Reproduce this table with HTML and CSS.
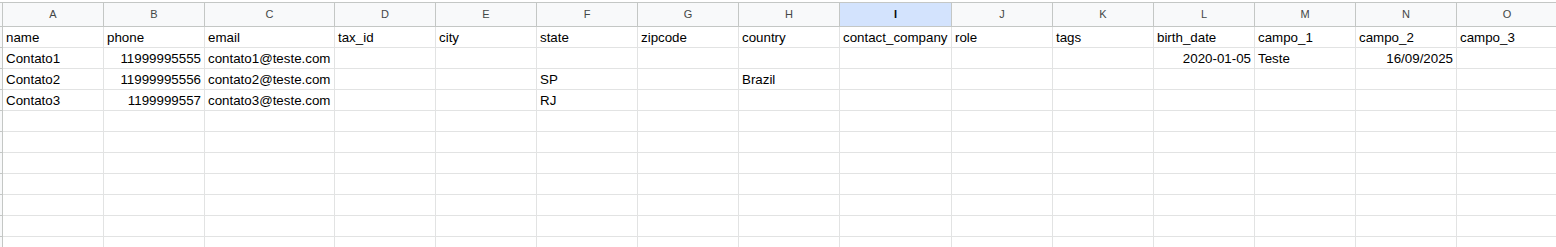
FILE: index.html
```html
<!DOCTYPE html>
<html lang="pt-BR">

<head>
    <meta charset="UTF-8">
    <meta name="viewport" content="width=device-width, initial-scale=1.0">
    <title>contatos</title>
    <link rel="stylesheet" href="styles.css">
</head>

<body>
    <div class="sheet">
        <!-- column letters -->
        <div class="row head-row">
            <div class="gutter"></div>
            <div class="col-head">A</div>
            <div class="col-head">B</div>
            <div class="col-head">C</div>
            <div class="col-head">D</div>
            <div class="col-head">E</div>
            <div class="col-head">F</div>
            <div class="col-head">G</div>
            <div class="col-head">H</div>
            <div class="col-head selected">I</div>
            <div class="col-head">J</div>
            <div class="col-head">K</div>
            <div class="col-head">L</div>
            <div class="col-head">M</div>
            <div class="col-head">N</div>
            <div class="col-head">O</div>
        </div>

        <div class="row">
            <div class="gutter"></div>
            <div class="cell">name</div>
            <div class="cell">phone</div>
            <div class="cell">email</div>
            <div class="cell">tax_id</div>
            <div class="cell">city</div>
            <div class="cell">state</div>
            <div class="cell">zipcode</div>
            <div class="cell">country</div>
            <div class="cell">contact_company</div>
            <div class="cell">role</div>
            <div class="cell">tags</div>
            <div class="cell">birth_date</div>
            <div class="cell">campo_1</div>
            <div class="cell">campo_2</div>
            <div class="cell">campo_3</div>
        </div>

        <div class="row">
            <div class="gutter"></div>
            <div class="cell">Contato1</div>
            <div class="cell num">11999995555</div>
            <div class="cell">contato1@teste.com</div>
            <div class="cell"></div>
            <div class="cell"></div>
            <div class="cell"></div>
            <div class="cell"></div>
            <div class="cell"></div>
            <div class="cell"></div>
            <div class="cell"></div>
            <div class="cell"></div>
            <div class="cell num">2020-01-05</div>
            <div class="cell">Teste</div>
            <div class="cell num">16/09/2025</div>
            <div class="cell"></div>
        </div>

        <div class="row">
            <div class="gutter"></div>
            <div class="cell">Contato2</div>
            <div class="cell num">11999995556</div>
            <div class="cell">contato2@teste.com</div>
            <div class="cell"></div>
            <div class="cell"></div>
            <div class="cell">SP</div>
            <div class="cell"></div>
            <div class="cell">Brazil</div>
            <div class="cell"></div>
            <div class="cell"></div>
            <div class="cell"></div>
            <div class="cell"></div>
            <div class="cell"></div>
            <div class="cell"></div>
            <div class="cell"></div>
        </div>

        <div class="row">
            <div class="gutter"></div>
            <div class="cell">Contato3</div>
            <div class="cell num">1199999557</div>
            <div class="cell">contato3@teste.com</div>
            <div class="cell"></div>
            <div class="cell"></div>
            <div class="cell">RJ</div>
            <div class="cell"></div>
            <div class="cell"></div>
            <div class="cell"></div>
            <div class="cell"></div>
            <div class="cell"></div>
            <div class="cell"></div>
            <div class="cell"></div>
            <div class="cell"></div>
            <div class="cell"></div>
        </div>
    </div>

    <script>
        // pad the sheet with empty rows
        const sheet = document.querySelector('.sheet')
        for (let r = 0; r < 7; r++) {
            const row = document.createElement('div')
            row.className = 'row'
            row.innerHTML = '<div class="gutter"></div>' + '<div class="cell"></div>'.repeat(15)
            sheet.appendChild(row)
        }
    </script>
</body>

</html>
```

FILE: styles.css
```css
* {
    box-sizing: border-box;
}

html,
body {
    margin: 0;
    height: 100%;
    overflow: hidden;
    background-color: #fff;
}

body {
    font-family: 'Liberation Sans', Arial, sans-serif;
    font-size: 10pt;
    color: #000;
}

.sheet {
    --cols: 3px 101px 101px 130px 101px 101px 101px 101px 101px 112px 101px 101px 101px 101px 101px 101px;
    padding-top: 2px;
}

.row {
    display: grid;
    grid-template-columns: var(--cols);
    height: 21px;
}

.row > div {
    border-right: 1px solid #e2e3e3;
    border-bottom: 1px solid #e2e3e3;
    white-space: nowrap;
    overflow: hidden;
}

.row > .gutter {
    background-color: #f8f9fa;
    border-right-color: #c4c7c5;
    border-bottom-color: #c4c7c5;
}

.head-row {
    height: 25px;
}

.head-row > div {
    border-top: 1px solid #c4c7c5;
    border-right-color: #c4c7c5;
    border-bottom-color: #c4c7c5;
}

.col-head {
    background-color: #f8f9fa;
    color: #444746;
    font-size: 11px;
    line-height: 23px;
    text-align: center;
}

.col-head.selected {
    background-color: #d3e3fd;
    color: #0b0b0b;
    font-weight: bold;
}

.cell {
    padding: 1px 3px 0;
    line-height: 20px;
}

.cell.num {
    text-align: right;
}
```
